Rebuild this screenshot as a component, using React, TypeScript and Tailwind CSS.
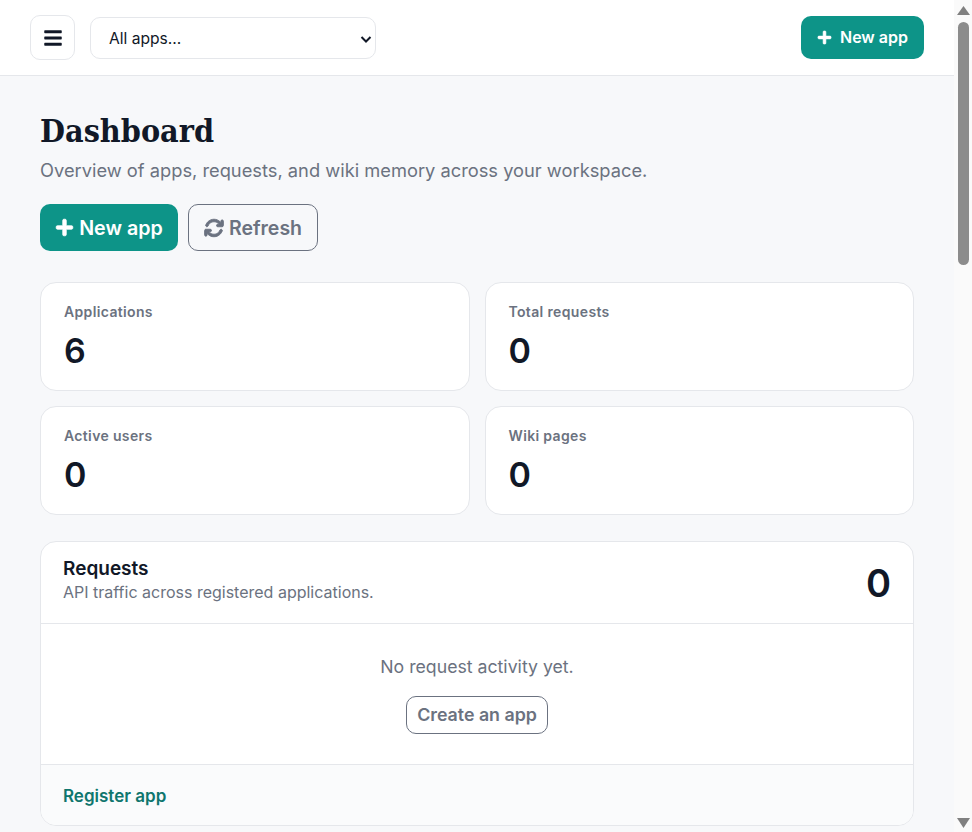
import { FaBars, FaPlus } from "react-icons/fa";
import { FaArrowsRotate } from "react-icons/fa6";

const sans = "font-['Inter','Liberation_Sans',sans-serif]";

function Stat({ label, value }: { label: string; value: string }) {
  return (
    <div className="h-[109px] rounded-[16px] border border-[#e5e7eb] bg-white px-[23px] pt-[19px]">
      <div className="text-[14px] leading-[20px] font-semibold tracking-[0.35px] text-[#6b7280]">{label}</div>
      <div className="mt-[5px] text-[34px] leading-[48px] font-semibold text-[#111827]">{value}</div>
    </div>
  );
}

export default function App() {
  return (
    <div className={`${sans} flex h-screen overflow-hidden bg-[#f7f8fa] text-[#111827]`}>
      <div className="w-[954px] shrink-0">
        <header className="flex h-[76px] items-center border-b border-[#e5e7eb] bg-white pr-[30px] pl-[30px]">
          <button className="flex h-[45px] w-[45px] items-center justify-center rounded-[10px] border border-[#e5e7eb] text-[#111827]">
            <FaBars className="h-[20px] w-[18px]" />
          </button>
          <div className="relative ml-[15px] flex h-[42px] w-[286px] items-center rounded-[10px] border border-[#e5e7eb] pt-[2px] pl-[18px] text-[15.6px]">
            All apps...
            <svg className="absolute top-[15px] right-[3px] h-[12px] w-[12px]" viewBox="0 0 12 12" fill="none" stroke="#111827" strokeWidth="2">
              <path d="M1.5 4l4.5 4.5L10.5 4" />
            </svg>
          </div>
          <button className="ml-auto flex h-[43px] w-[123px] items-center justify-center gap-[8px] rounded-[10px] bg-[#0d9488] text-[16px] font-semibold text-white">
            <FaPlus className="h-[15px] w-[15px]" stroke="currentColor" strokeWidth={20} />
            <span className="mb-[2px]">New app</span>
          </button>
        </header>
        <main className="pt-[35px] pr-[40px] pl-[40px]">
          <h1 className="font-['DejaVu_Serif_Condensed','DejaVu_Serif',serif] text-[32px] leading-[40px] font-bold">Dashboard</h1>
          <p className="mt-[5px] text-[18.3px] leading-[28px] text-[#6b7280]">Overview of apps, requests, and wiki memory across your workspace.</p>
          <div className="mt-[20px] flex gap-[10px]">
            <button className="flex h-[47px] w-[138px] items-center justify-center gap-[5px] rounded-[10px] bg-[#0d9488] text-[19.7px] font-semibold text-white">
              <FaPlus className="h-[19px] w-[19px]" stroke="currentColor" strokeWidth={20} />
              <span className="mt-[2px]">New app</span>
            </button>
            <button className="flex h-[47px] w-[130px] items-center justify-center gap-[5px] rounded-[10px] border border-[#6b7280] text-[19.5px] font-semibold text-[#6b7280]">
              <FaArrowsRotate className="h-[20px] w-[20px]" stroke="currentColor" strokeWidth={24} />
              <span className="mt-[2px]">Refresh</span>
            </button>
          </div>
          <div className="mt-[31px] grid grid-cols-2 gap-[15px]">
            <Stat label="Applications" value="6" />
            <Stat label="Total requests" value="0" />
            <Stat label="Active users" value="0" />
            <Stat label="Wiki pages" value="0" />
          </div>
          <section className="mt-[26px] overflow-hidden rounded-[16px] border border-[#e5e7eb] bg-white">
            <div className="flex h-[82px] items-center justify-between border-b border-[#e5e7eb] px-[22px]">
              <div className="mb-[5px]">
                <div className="text-[19px] leading-[24px] font-semibold">Requests</div>
                <div className="text-[16px] leading-[22px] text-[#6b7280]">API traffic across registered applications.</div>
              </div>
              <div className="text-[38px] leading-[48px] font-semibold">0</div>
            </div>
            <div className="flex h-[141px] flex-col items-center border-b border-[#e5e7eb] pt-[30px]">
              <div className="text-[17.7px] leading-[26px] text-[#6b7280]">No request activity yet.</div>
              <button className="mt-[16px] h-[38px] w-[142px] rounded-[10px] border border-[#6b7280] text-[17.8px] font-semibold text-[#6b7280]">Create an app</button>
            </div>
            <div className="flex h-[60px] items-center bg-[#fafbfc] px-[22px] pt-[3px]">
              <a className="text-[17px] font-semibold text-[#0f766e]">Register app</a>
            </div>
          </section>
        </main>
      </div>
      <aside className="flex w-[18px] shrink-0 flex-col items-start bg-[#fafafa] pt-[6px] pb-[4px] pl-[3px]">
        <svg className="h-[9px] w-[13px]" viewBox="0 0 13 9" fill="#808080"><path d="M6.5 0L13 9H0z" /></svg>
        <div className="mt-[7px] ml-[1px] h-[243px] w-[11px] rounded-[6px] bg-[#8c8c8c]" />
        <svg className="mt-auto h-[10px] w-[13px]" viewBox="0 0 13 10" fill="#808080"><path d="M0 0H13L6.5 10z" /></svg>
      </aside>
    </div>
  );
}
